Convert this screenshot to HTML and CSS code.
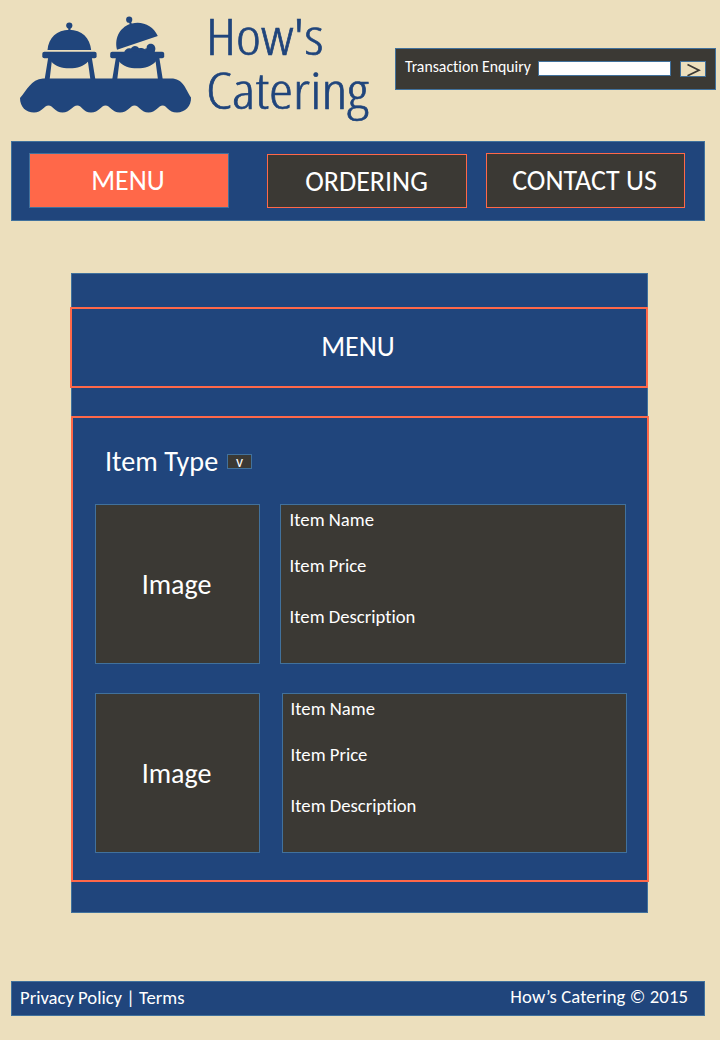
FILE: index.html
```html
<!DOCTYPE html>
<html lang="en">
<head>
<meta charset="utf-8">
<title>How's Catering</title>
<link rel="stylesheet" href="styles.css">
</head>
<body>
<header class="header">
  <svg class="logo" width="375" height="130" viewBox="0 0 375 130" role="img" aria-label="How's Catering">
    <g fill="currentColor">
      <circle cx="69.3" cy="25.500" r="3.100"/>
      <path d="M68.300 27h2.200v4h-2.200zM47.500 50C48.500 38 57 29.800 69.300 29.800S90 38 91.200 50z"/>
      <rect x="42.300" y="51.700" width="54.300" height="6.500" rx="2"/>
      <path d="M48.300 57h4l-2.600 22H44.700zM87.300 57h4.400l3.600 22h-5z"/>
      <path d="M50 57H89.500L88 61.500C84 66.300 77 68.300 69.500 68.300S55 66.300 51.300 61.500z"/>
      <circle cx="129.200" cy="19.700" r="3.100"/>
      <path d="M129 22l2-.6 1 3.600-2 .6zM117 49.700C114 37 121 26 132 23.500 143 21 153 26 157.800 36z"/>
      <path d="M124 53c1-4 4-5.300 7-4.400 1.500-3.500 6-3.500 8-.4 2.400-.6 4.500 0 6.200 1.200.2-1-.1-1 1.500-1.200C146 42 155.500 42 155.400 49L154.500 53z"/>
      <rect x="110.200" y="51.700" width="54" height="6.500" rx="2"/>
      <path d="M116 57h4l-2.700 22h-5zM155 57h4.200l3.500 22h-4.800z"/>
      <path d="M118 57H157L155.700 61.500C151.500 66.300 145 68.300 137.200 68.300S123 66.300 119.200 61.500z"/>
      <path d="M43 78.500H171C183 78.500 185 88 191 97.500 191.500 106 185 112.500 177 112.500 168 112.500 167 105.500 162.700 105.500S156 112.500 148.500 112.500 139 105.500 134.500 105.500 128 112.500 120 112.500 110 105.500 105.500 105.500 99 112.500 91 112.500 82 105.500 77.300 105.500 70 112.500 62.500 112.500 53 105.500 48.500 105.500 42 112.500 34 112.500C26 112.500 20 107 20 98 27 90 31 79.500 43 78.500z"/>
      <text class="wordmark" x="206" y="55" textLength="117.500" lengthAdjust="spacingAndGlyphs">How's</text>
      <text class="wordmark" x="206" y="108.500" textLength="162.500" lengthAdjust="spacingAndGlyphs">Catering</text>
    </g>
  </svg>
  <form class="enquiry">
    <label class="enquiry-label" for="enquiry">Transaction Enquiry</label>
    <input class="enquiry-input" id="enquiry" type="text">
    <button class="enquiry-go" type="button" aria-label="Search">
      <svg width="24" height="14" viewBox="0 0 24 14"><path d="M6.500 2.500L18 8.200 6.500 13.800" fill="none" stroke="currentColor" stroke-width="1.700"/></svg>
    </button>
  </form>
</header>

<nav class="nav">
  <a class="tab tab-active">MENU</a>
  <a class="tab tab-ordering">ORDERING</a>
  <a class="tab tab-contact">CONTACT US</a>
</nav>

<main class="panel">
  <h1 class="panel-title">MENU</h1>
  <section class="list">
    <div class="filter">
      <span class="filter-label">Item Type</span>
      <button class="filter-toggle" type="button">v</button>
    </div>
    <article class="item">
      <div class="thumb">Image</div>
      <div class="details">
        <p class="name">Item Name</p>
        <p class="price">Item Price</p>
        <p class="description">Item Description</p>
      </div>
    </article>
    <article class="item item-alt">
      <div class="thumb">Image</div>
      <div class="details">
        <p class="name">Item Name</p>
        <p class="price">Item Price</p>
        <p class="description">Item Description</p>
      </div>
    </article>
  </section>
</main>

<footer class="footer">
  <span class="legal">Privacy Policy | Terms</span>
  <span class="copyright">How’s Catering © 2015</span>
</footer>
</body>
</html>
```
FILE: styles.css
```css
* { box-sizing: border-box; }

body {
  margin: 0;
  width: 720px;
  height: 1040px;
  background: #ecdfbd;
  color: #fff;
  font-family: Carlito, Lato, sans-serif;
  font-size: 18.67px;
  font-variant-ligatures: none;
}

button, input { font-family: inherit; color: inherit; padding: 0; margin: 0; }

.header { display: flex; height: 141px; }
.logo { color: #20457c; flex: none; }
.wordmark {
  font-family: "Open Sans", sans-serif;
  font-weight: 300;
  font-stretch: 75%;
  font-size: 50px;
  stroke: currentColor;
  stroke-width: 0.6px;
}

.enquiry {
  display: flex;
  width: 321px;
  height: 42px;
  margin: 48px 0 0 20px;
  padding: 0 9px;
  background: #3b3934;
  border: 1px solid #41719c;
}
.enquiry-label {
  width: 133px;
  font-size: 15.75px;
  line-height: 36px;
  white-space: nowrap;
}
.enquiry-input {
  width: 133px;
  height: 15px;
  margin-top: 12px;
  background: #fff;
  color: #3b3934;
  border: 1px solid #41719c;
}
.enquiry-go {
  display: flex;
  width: 26px;
  height: 16px;
  margin: 12px 0 0 9px;
  background: #ecdfbd;
  color: #3b3934;
  border: 1px solid #41719c;
}

.nav {
  display: flex;
  align-items: flex-end;
  width: 694px;
  height: 80px;
  margin-left: 11px;
  padding: 0 0 12px 17px;
  background: #20457c;
  border: 1px solid #41719c;
}
.tab {
  width: 200px;
  height: 55px;
  background: #3b3934;
  border: 1px solid #ff6849;
  font-size: 28px;
  line-height: 53px;
  text-align: center;
}
.tab-active { background: #ff6849; border-color: #41719c; padding-right: 2px; }
.tab-ordering { height: 54px; margin-left: 38px; padding-right: 1px; }
.tab-contact { width: 199px; margin-left: 19px; padding-right: 2px; }

.panel {
  width: 577px;
  height: 640px;
  margin: 52px 0 0 71px;
  padding-top: 33px;
  background: #20457c;
  border: 1px solid #41719c;
}
.panel-title {
  width: 578px;
  height: 81px;
  margin: 0 0 28px -2px;
  border: 2px solid #ff6849;
  padding-right: 2px;
  font-size: 28px;
  font-weight: 400;
  line-height: 76px;
  text-align: center;
}
.list {
  width: 578px;
  height: 466px;
  margin-left: -1px;
  padding: 28px 0 0 22px;
  border: 2px solid #ff6849;
}
.filter { display: flex; height: 58px; padding-left: 10px; }
.filter-label { width: 122px; font-size: 28.2px; line-height: 32px; white-space: nowrap; }
.filter-toggle {
  width: 25px;
  height: 15px;
  margin-top: 8px;
  background: #3b3934;
  border: 1px solid #41719c;
  font-size: 15.6px;
  line-height: 13px;
}
.item { display: flex; height: 160px; margin-bottom: 29px; }
.thumb, .details { background: #3b3934; border: 1px solid #41719c; }
.thumb {
  width: 165px;
  padding-right: 2px;
  font-size: 28px;
  line-height: 160px;
  text-align: center;
}
.details {
  width: 346px;
  margin-left: 20px;
  padding: 5px 0 0 8.600px;
  line-height: 20px;
}
.item-alt .details { width: 345px; margin-left: 22px; padding-left: 7.600px; }
.name, .price, .description { margin: 0; }
.name { margin-bottom: 26px; }
.price { margin-bottom: 31px; }

.footer {
  display: flex;
  justify-content: space-between;
  width: 694px;
  height: 35px;
  margin: 68px 0 0 11px;
  padding: 0 16px 0 8px;
  background: #20457c;
  border: 1px solid #41719c;
}
.legal { line-height: 32px; }
.copyright { line-height: 30px; letter-spacing: 0.1px; }
```
